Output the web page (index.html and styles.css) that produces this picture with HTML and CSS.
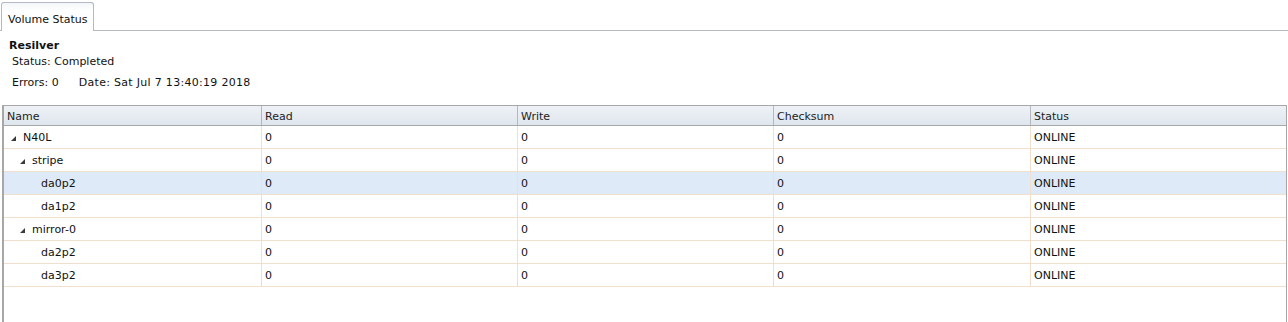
FILE: index.html
```html
<!DOCTYPE html>
<html lang="en">
<head>
    <meta charset="UTF-8">
    <title>Volume Status</title>
    <link rel="stylesheet" href="styles.css">
</head>
<body>
    <div class="tab-bar">
        <div class="tab">Volume Status</div>
    </div>

    <div class="info">
        <div class="info-title">Resilver</div>
        <div class="info-line">Status: Completed</div>
        <div class="info-line info-split">
            <span>Errors: 0</span>
            <span class="info-date">Date: Sat Jul 7 13:40:19 2018</span>
        </div>
    </div>

    <div class="grid">
        <div class="grid-row grid-head">
            <div class="cell">Name</div>
            <div class="cell">Read</div>
            <div class="cell">Write</div>
            <div class="cell">Checksum</div>
            <div class="cell">Status</div>
        </div>

        <div class="grid-row">
            <div class="cell name"><span class="arrow"><svg width="5" height="5" viewBox="0 0 5 5"><polygon points="5,0 5,5 0,5"/></svg></span>N40L</div>
            <div class="cell">0</div><div class="cell">0</div><div class="cell">0</div><div class="cell">ONLINE</div>
        </div>
        <div class="grid-row">
            <div class="cell name"><span class="indent"></span><span class="arrow"><svg width="5" height="5" viewBox="0 0 5 5"><polygon points="5,0 5,5 0,5"/></svg></span>stripe</div>
            <div class="cell">0</div><div class="cell">0</div><div class="cell">0</div><div class="cell">ONLINE</div>
        </div>
        <div class="grid-row selected">
            <div class="cell name"><span class="indent"></span><span class="indent"></span><span class="arrow"></span>da0p2</div>
            <div class="cell">0</div><div class="cell">0</div><div class="cell">0</div><div class="cell">ONLINE</div>
        </div>
        <div class="grid-row">
            <div class="cell name"><span class="indent"></span><span class="indent"></span><span class="arrow"></span>da1p2</div>
            <div class="cell">0</div><div class="cell">0</div><div class="cell">0</div><div class="cell">ONLINE</div>
        </div>
        <div class="grid-row">
            <div class="cell name"><span class="indent"></span><span class="arrow"><svg width="5" height="5" viewBox="0 0 5 5"><polygon points="5,0 5,5 0,5"/></svg></span>mirror-0</div>
            <div class="cell">0</div><div class="cell">0</div><div class="cell">0</div><div class="cell">ONLINE</div>
        </div>
        <div class="grid-row">
            <div class="cell name"><span class="indent"></span><span class="indent"></span><span class="arrow"></span>da2p2</div>
            <div class="cell">0</div><div class="cell">0</div><div class="cell">0</div><div class="cell">ONLINE</div>
        </div>
        <div class="grid-row">
            <div class="cell name"><span class="indent"></span><span class="indent"></span><span class="arrow"></span>da3p2</div>
            <div class="cell">0</div><div class="cell">0</div><div class="cell">0</div><div class="cell">ONLINE</div>
        </div>
    </div>
</body>
</html>
```

FILE: styles.css
```css
body {
    font-family: "DejaVu Sans", Verdana, sans-serif;
    font-size: 11px;
    color: #111;
    background-color: #fff;
    margin: 0;
    height: 100vh;
    display: flex;
    flex-direction: column;
}
.tab-bar {
    display: flex;
    align-items: flex-end;
    height: 30px;
    padding-left: 1px;
    border-bottom: 1px solid #b3bac5;
}
.tab {
    height: 24px;
    padding: 4px 6px 0 6px;
    margin-bottom: -1px;
    border: 1px solid #b3bac5;
    border-bottom: none;
    border-radius: 3px 3px 0 0;
    background: linear-gradient(#f4f6f9, #fff 30%);
    display: flex;
    align-items: center;
}
.info {
    padding: 7px 0 0 9px;
    line-height: 16px;
}
.info-title {
    font-weight: bold;
}
.info-line {
    padding-left: 3px;
}
.info-split {
    display: flex;
    gap: 20px;
    margin-top: 5px;
}
.info-date {
    letter-spacing: 0.3px;
}
.grid {
    flex: 1;
    margin: 14px 1px 0 2px;
    border: 1px solid #a7a7a7;
    border-bottom: none;
    border-left-width: 2px;
}
.grid-row {
    display: grid;
    grid-template-columns: 257px 256px 256px 257px 1fr;
    height: 22px;
    border-bottom: 1px solid #f0dfcd;
}
.grid-row .cell {
    display: flex;
    align-items: center;
    padding-left: 3px;
    border-left: 1px solid #f0dfcd;
}
.grid-row .cell:first-child {
    border-left: none;
}
.grid-head {
    height: 19px;
    border-bottom: 1px solid #a7a7a7;
    background: linear-gradient(#eef2f6, #dfe6ee);
    color: #222;
}
.grid-head .cell {
    padding-top: 2px;
    border-left-color: #b5b9be;
}
.selected {
    background-color: #deeaf7;
}
.indent {
    display: inline-block;
    width: 9px;
    flex: none;
}
.arrow {
    display: inline-flex;
    align-items: center;
    width: 16px;
    height: 8px;
    padding-left: 4px;
    box-sizing: border-box;
    flex: none;
}
.arrow svg {
    fill: #3a3a3a;
    margin-top: 3px;
}
```
